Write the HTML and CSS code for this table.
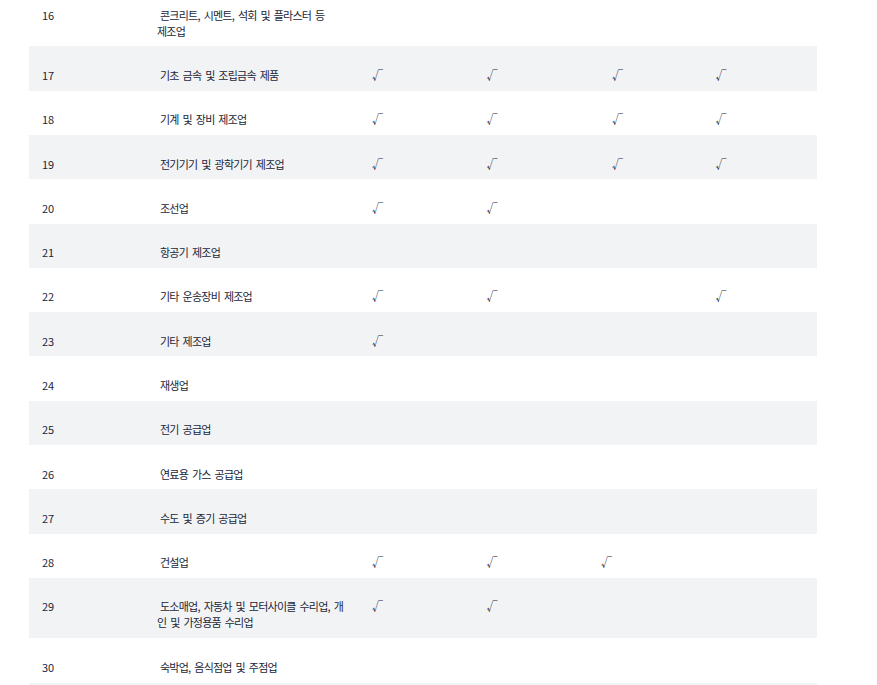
FILE: index.html
```html
<!DOCTYPE html>
<html lang="ko">
<head>
<meta charset="utf-8">
<title>업종 표</title>
<link rel="stylesheet" href="styles.css">
</head>
<body>
<table class="grid">
  <colgroup>
    <col class="c-num"><col class="c-name"><col class="c-chk"><col class="c-chk"><col class="c-chk"><col class="c-chk">
  </colgroup>
  <tbody>
    <tr><td class="num">16</td><td class="name">콘크리트, 시멘트, 석회 및 플라스터 등<br>제조업</td><td></td><td></td><td></td><td></td></tr>
    <tr><td class="num">17</td><td class="name">기초 금속 및 조립금속 제품</td><td class="chk">√</td><td class="chk">√</td><td class="chk"><span class="ind">√</span></td><td class="chk">√</td></tr>
    <tr><td class="num">18</td><td class="name">기계 및 장비 제조업</td><td class="chk">√</td><td class="chk">√</td><td class="chk"><span class="ind">√</span></td><td class="chk">√</td></tr>
    <tr><td class="num">19</td><td class="name">전기기기 및 광학기기 제조업</td><td class="chk">√</td><td class="chk">√</td><td class="chk"><span class="ind">√</span></td><td class="chk">√</td></tr>
    <tr><td class="num">20</td><td class="name">조선업</td><td class="chk">√</td><td class="chk">√</td><td></td><td></td></tr>
    <tr><td class="num">21</td><td class="name">항공기 제조업</td><td></td><td></td><td></td><td></td></tr>
    <tr><td class="num">22</td><td class="name">기타 운송장비 제조업</td><td class="chk">√</td><td class="chk">√</td><td></td><td class="chk">√</td></tr>
    <tr><td class="num">23</td><td class="name">기타 제조업</td><td class="chk">√</td><td></td><td></td><td></td></tr>
    <tr><td class="num">24</td><td class="name">재생업</td><td></td><td></td><td></td><td></td></tr>
    <tr><td class="num">25</td><td class="name">전기 공급업</td><td></td><td></td><td></td><td></td></tr>
    <tr><td class="num">26</td><td class="name">연료용 가스 공급업</td><td></td><td></td><td></td><td></td></tr>
    <tr><td class="num">27</td><td class="name">수도 및 증기 공급업</td><td></td><td></td><td></td><td></td></tr>
    <tr><td class="num">28</td><td class="name">건설업</td><td class="chk">√</td><td class="chk">√</td><td class="chk">√</td><td></td></tr>
    <tr><td class="num">29</td><td class="name">도소매업, 자동차 및 모터사이클 수리업, 개<br>인 및 가정용품 수리업</td><td class="chk">√</td><td class="chk">√</td><td></td><td></td></tr>
    <tr><td class="num">30</td><td class="name">숙박업, 음식점업 및 주점업</td><td></td><td></td><td></td><td></td></tr>
    <tr class="tail"><td></td><td></td><td></td><td></td><td></td><td></td></tr>
  </tbody>
</table>
</body>
</html>
```

FILE: styles.css
```css
html, body {
  margin: 0;
  padding: 0;
  background: #ffffff;
}

body {
  font-family: "Noto Sans CJK KR", "Noto Sans", sans-serif;
  font-size: 11px;
  color: #222638;
  overflow: hidden;
}

.grid {
  border-collapse: collapse;
  border-spacing: 0;
  table-layout: fixed;
  width: 788px;
  margin: -13.9px 0 0 29px;
}

.c-num { width: 115px; }
.c-name { width: 215px; }
.c-chk { width: 114.5px; }

.grid td {
  padding: 20.5px 0 7.8px 13px;
  line-height: 16px;
  vertical-align: top;
  white-space: nowrap;
}

.grid tbody tr:nth-child(even) {
  background: #f2f3f5;
}

.grid tr.tail td {
  height: 16px;
}

.name {
  text-indent: 3px;
  font-feature-settings: "palt";
  letter-spacing: -0.75px;
  word-spacing: 1.5px;
}

.ind {
  padding-left: 11px;
}
```
